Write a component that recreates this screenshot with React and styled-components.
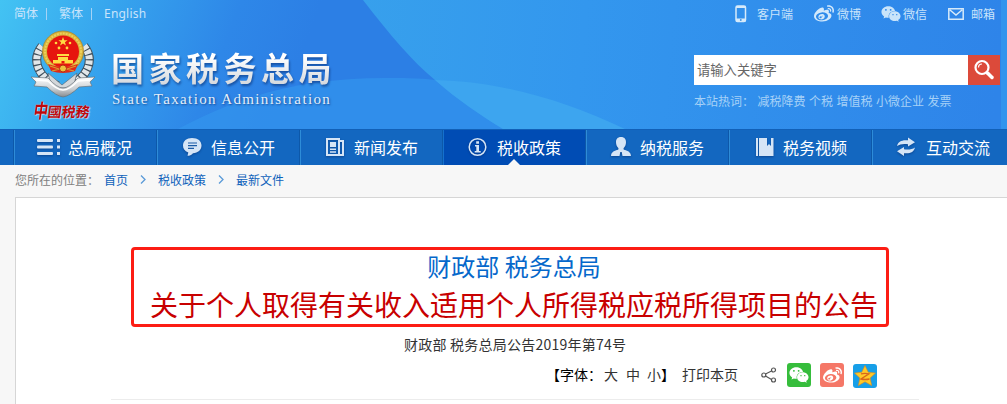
import React from 'react';
import styled, { createGlobalStyle, css } from 'styled-components';
import { FaWeibo, FaWeixin } from 'react-icons/fa';

const GlobalStyle = createGlobalStyle`
  * {
    box-sizing: border-box;
  }

  body {
    margin: 0;
    background: #f7f7f7;
    font-family: 'Noto Sans CJK SC', sans-serif;
    font-size: 12px;
    overflow: hidden;
  }
`;

const Page = styled.div`
  width: 1007px;
  height: 404px;
  overflow: hidden;
`;

const Header = styled.header`
  position: relative;
  z-index: 0;
  height: 130px;
  overflow: hidden;
  border-bottom: 1px solid #1160b8;
`;

const Backdrop = styled.svg`
  position: absolute;
  inset: 0;
  z-index: -1;
`;

const TopBar = styled.div`
  display: flex;
  justify-content: space-between;
  height: 27px;
  padding: 0 12px 0 14px;
  line-height: 27px;
  color: #c9e4fb;
`;

const Languages = styled.div`
  display: flex;
  white-space: pre;
`;

const Language = styled.span`
  font-family: 'Noto Sans', 'Noto Sans CJK SC', sans-serif;
  letter-spacing: ${props => props.$spacing || 0};
`;

const Divider = styled.span`
  width: 1px;
  height: 12px;
  margin: 8px ${props => props.$after} 0 8px;
  background: #a5d3f6;
`;

const Channels = styled.div`
  display: flex;
`;

const Channel = styled.span`
  display: flex;
  align-items: center;
  gap: ${props => props.$gap};
  margin-left: ${props => props.$before};
`;

const Banner = styled.div`
  display: flex;
  justify-content: space-between;
  padding: 0 7px 0 30px;
`;

const Brand = styled.div`
  display: flex;
`;

const EmblemBox = styled.div`
  width: 66px;
  padding-top: 3px;
`;

const Calligraphy = styled.div`
  margin: -4px 0 0 4px;
  height: 24px;
  line-height: 24px;
  font-size: 14px;
  font-weight: 700;
  white-space: nowrap;
  color: #bd080c;
  transform: skewX(-8deg);
  text-shadow: 0 0 1px rgba(255, 255, 255, 0.8), 1px 1px 1px rgba(232, 242, 251, 0.6);
`;

const LeadCharacter = styled.span`
  display: inline-block;
  width: 14px;
  font-size: 17px;
  transform: scale(0.85, 1.15);
  transform-origin: left center;
`;

const Names = styled.div`
  padding: 20px 0 0 15px;
`;

const ChineseName = styled.h1`
  margin: 0;
  height: 42px;
  line-height: 41px;
  font-size: 33px;
  font-weight: 700;
  letter-spacing: 4.5px;
  white-space: nowrap;
  color: transparent;
  background: linear-gradient(#fff 25%, #d4d8dd 90%);
  background-clip: text;
  filter: drop-shadow(1px 2px 1px rgba(10, 50, 120, 0.6));
`;

const EnglishName = styled.div`
  height: 20px;
  padding-left: 1px;
  line-height: 20px;
  font-family: 'Liberation Serif', serif;
  font-size: 15px;
  letter-spacing: 1.37px;
  white-space: nowrap;
  color: #e3eefa;
  text-shadow: 1px 1px 2px rgba(10, 50, 120, 0.7);
`;

const SearchArea = styled.div`
  width: 306px;
  padding-top: 28px;
`;

const SearchBox = styled.div`
  display: flex;
  height: 30px;
`;

const SearchField = styled.div`
  flex: 1;
  padding-left: 3px;
  line-height: 30px;
  font-size: 13.3px;
  color: #666;
  background: #fff;
`;

const SearchButton = styled.div`
  display: flex;
  align-items: center;
  justify-content: center;
  width: 32px;
  background: #dc4a3a;
`;

const HotWords = styled.div`
  display: flex;
  height: 32px;
  line-height: 32px;
  white-space: pre;
  color: #a6d1f7;
`;

const HotWord = styled.span`
  margin-right: 3.5px;
`;

const Nav = styled.nav`
  display: flex;
  height: 35px;
  padding-left: 14px;
  background: #1367c0;
`;

const NavItem = styled.div`
  position: relative;
  display: flex;
  flex: 0 0 143px;
  align-items: center;
  padding-left: 22px;
  border-left: 1px solid #2e8cd8;
  box-shadow: -1px 0 0 #0d58a9;
  font-size: 16px;
  color: #fff;

  ${props => props.$active && css`
    background: #004cb4;
    border-left-color: #1571cd;

    &::after {
      content: '';
      position: absolute;
      left: 64px;
      bottom: 0;
      border: 6px solid transparent;
      border-top: 0;
      border-bottom-color: #f7f7f7;
    }
  `}
`;

const NavIcon = styled.svg`
  flex: none;
  width: 24px;
  height: 24px;
  margin: 0 7px 2px 0;
  color: #d5e5f6;
  filter: drop-shadow(0 1px 1px rgba(0, 30, 90, 0.45));
`;

const NavLabel = styled.span`
  line-height: 35px;
  white-space: nowrap;
`;

const Breadcrumb = styled.div`
  display: flex;
  align-items: center;
  height: 32px;
  padding: 0 0 3px 15px;
  color: #808080;
`;

const Trail = styled.span`
  margin-right: 5px;
`;

const Crumb = styled.span`
  color: #0f62bb;
`;

const Chevron = styled.svg`
  margin: 0 12px;
`;

const Article = styled.main`
  height: 220px;
  margin-left: 15px;
  padding-top: 49px;
  background: #fff;
  border: 1px solid #d6d6d6;
  border-right: 0;
`;

const Highlight = styled.div`
  width: 758px;
  height: 80px;
  margin-left: 115px;
  border: 3px solid #fc1d14;
  border-radius: 4px;
  text-align: center;
  white-space: nowrap;
`;

const Issuer = styled.div`
  height: 34px;
  padding-left: 8px;
  line-height: 32px;
  font-size: 24px;
  color: #0568cb;
`;

const Title = styled.h2`
  height: 40px;
  margin: 0;
  padding-left: 8px;
  line-height: 41px;
  font-size: 28px;
  font-weight: 400;
  color: #c80000;
`;

const DocumentNumber = styled.div`
  height: 36px;
  padding-left: 388px;
  line-height: 35px;
  font-size: 14px;
  letter-spacing: 0.23px;
  color: #333;
`;

const Tools = styled.div`
  display: flex;
  align-items: center;
  width: 808px;
  height: 37px;
  margin-left: 95px;
  padding-left: 435px;
  border-bottom: 1px solid #ececec;
  white-space: nowrap;
  font-size: 14px;
  color: #000;
`;

const FontSizes = styled.span`
  display: flex;
  height: 46px;
  line-height: 33px;
`;

const SizeOption = styled.span`
  margin-left: ${props => props.$before};
  color: #333;
`;

const Print = styled.span`
  height: 46px;
  margin-left: 7px;
  line-height: 33px;
  color: #333;
`;

const ShareIcon = styled.svg`
  margin: -13px 10px 0 23px;
`;

const ShareButton = styled.span`
  display: flex;
  align-items: center;
  justify-content: center;
  width: 24px;
  height: 24px;
  margin: ${props => props.$top || '-12px'} 9px 0 0;
  border-radius: 3px;
  color: #fff;
  background: ${props => props.$color};
`;

const hotWords = ['减税降费', '个税', '增值税', '小微企业', '发票'];

const navItems = [
  {
    label: '总局概况',
    icon: (
      <g fill="currentColor">
        <rect x="0" y="4" width="16" height="3" rx="1" />
        <rect x="0" y="10.500" width="16" height="3" rx="1" />
        <rect x="0" y="17" width="16" height="3" rx="1" />
        <path d="M20 4h3v3h-3zM20 10.500h3v3h-3zM20 17h3v3h-3z" />
      </g>
    ),
  },
  {
    label: '信息公开',
    icon: (
      <>
        <path fill="currentColor" d="M12 3c6 0 9.500 3 9.500 7.500S18 18 13 18.200c-1.500 1.800-3.500 2.500-5.500 2.600l.8-3.400C4.500 16 3 13.500 3 10.500 3 6 6.500 3 12 3z" />
        <path stroke="#1c5ca6" strokeWidth="1.200" d="M8 8h9M8 10.700h9M8 13.400h6" />
      </>
    ),
  },
  {
    label: '新闻发布',
    icon: (
      <g fill="none" stroke="currentColor" strokeWidth="2">
        <path d="M4 4h12v16H4zM16 6h4v14h-4" />
        <path fill="currentColor" strokeWidth="0" d="M7 7h6v5H7zM7 13.500h6V15H7zM7 16.300h6v1.500H7z" />
      </g>
    ),
  },
  {
    label: '税收政策',
    active: true,
    icon: (
      <>
        <circle cx="11.500" cy="12" r="8.300" fill="none" stroke="currentColor" strokeWidth="1.500" />
        <path fill="currentColor" d="M10.200 6.200h2.800v2.600h-2.800zM9 10h4v6h1.700v1.500H8.700V16h1.600v-4.500H9z" />
      </>
    ),
  },
  {
    label: '纳税服务',
    icon: (
      <path fill="currentColor" d="M12 2c3.500 0 5 2.200 5 5.200 0 2.600-1 4.600-2.500 6l.3 1.500c3.500.8 7 2 7.200 6.300h-8.500l-.8-4h-1.400l-.8 4H2c.2-4.300 3.700-5.500 7.200-6.300l.3-1.500C8 11.800 7 9.800 7 7.200 7 4.200 8.500 2 12 2z" />
    ),
  },
  {
    label: '税务视频',
    icon: <path fill="currentColor" d="M4 3h2v18H4zM7 3h8v8l2-2 2 2V3h2.500v18H7z" />,
  },
  {
    label: '互动交流',
    icon: (
      <g fill="currentColor">
        <path d="M2 11C3 6.500 7 4.500 13 5.300V2.500L20 7.200l-7 4.300V9.300C9 8.500 5 9 2 11z" />
        <path d="M20 12.500c-1 4.500-5 6.500-11 5.700V21L2 16.300 9 12v2.200c4 .8 8 .3 11-1.700z" />
      </g>
    ),
  },
];

const HeaderBackdrop = () => (
  <Backdrop width="1007" height="129" viewBox="0 0 1007 129">
    <defs>
      <linearGradient id="left" gradientUnits="userSpaceOnUse" x1="0" y1="0" x2="280" y2="110">
        <stop offset="0" stopColor="#43c3f3" />
        <stop offset="0.4" stopColor="#35a1ed" />
        <stop offset="0.75" stopColor="#2e87e8" />
        <stop offset="1" stopColor="#2c7fe5" />
      </linearGradient>
      <linearGradient id="right" gradientUnits="userSpaceOnUse" x1="360" y1="0" x2="1000" y2="60">
        <stop offset="0" stopColor="#37a0ec" />
        <stop offset="0.35" stopColor="#3397ee" />
        <stop offset="1" stopColor="#2e84e9" />
      </linearGradient>
    </defs>
    <path fill="url(#left)" d="M0 0h520v129H0z" />
    <path fill="#3498ee" fillOpacity="0.6" d="M178 129C240 96 300 78 385 78C400 78 418 78 435 80L503 129z" />
    <path fill="url(#right)" d="M363 0C390 35 412 61 435 80C458 100 480 115 503 129H1007V0z" />
    <path fill="#3da5ef" d="M435 80C505 82 565 101 625 129H503C480 115 458 100 435 80z" />
    <path fill="#3194ee" d="M1001 0h6v129h-6z" />
  </Backdrop>
);

const Emblem = () => (
  <svg width="66" height="69" viewBox="0 0 66 69">
    <defs>
      <linearGradient id="silver" x1="0" y1="0" x2="0" y2="1">
        <stop offset="0" stopColor="#fff" />
        <stop offset="0.6" stopColor="#c9ced2" />
        <stop offset="1" stopColor="#858b90" />
      </linearGradient>
    </defs>
    <g fill="none" stroke="#40505c" strokeWidth="9">
      <path d="M12 16C0 31 10 49 28 56" />
      <path d="M54 16C66 31 56 49 38 56" />
    </g>
    <g fill="none" stroke="#e1e6e9" strokeWidth="7" strokeDasharray="4 1.200">
      <path d="M12 16C0 31 10 49 28 56" />
      <path d="M54 16C66 31 56 49 38 56" />
    </g>
    <path fill="#d3d7da" stroke="#59636b" strokeWidth="0.6" d="M18 43l14 12 15-12-4 15H22z" />
    <circle cx="33" cy="21.500" r="20.500" fill="#d9b43a" stroke="#a98124" strokeWidth="0.7" />
    <circle cx="33" cy="21.500" r="18" fill="none" stroke="#ecd05c" strokeWidth="2" strokeDasharray="2 1" />
    <circle cx="33" cy="21.500" r="16" fill="#e6150e" />
    <path fill="#e02a16" d="M18 34q15 6 30 0l-3 7q-12 4-24 0z" />
    <path fill="none" stroke="#d9a02f" strokeWidth="1.200" d="M20 36l9 3M46 36l-9 3M22 41l8-2M44 41l-8-2" />
    <path fill="#ffdc42" d="M33 7l1.200 3.200h3.400l-2.700 2 1 3.300-2.900-2-2.900 2 1-3.300-2.700-2h3.400z" />
    <g fill="#ffdc42">
      <circle cx="26" cy="13" r="1.300" />
      <circle cx="40" cy="13" r="1.300" />
      <circle cx="29" cy="18" r="1.400" />
      <circle cx="37" cy="18" r="1.400" />
      <path d="M27 24h12v2H27zM28 27h10v3H28zM23 30h20v3.500H23z" />
    </g>
    <path fill="#e6150e" d="M31.500 31h3v2.500h-3z" />
    <circle cx="33" cy="38.500" r="3.500" fill="#edc13e" stroke="#b72d14" />
    <path fill="url(#silver)" stroke="#68727a" strokeWidth="0.7" d="M1 47l17 1q9 10 15 10t15-10l17-1-5 5 2 4-13 1q-9 9-16 10-7-1-16-10L4 56l2-4z" />
    <path fill="none" stroke="#fff" strokeWidth="1.500" d="M6 50l12 1q9 9 15 9t15-9l12-1" />
  </svg>
);

const Separator = () => (
  <Chevron width="6" height="9" viewBox="0 0 6 9">
    <path fill="none" stroke="#5a9ad8" strokeWidth="1.300" d="M1 .5l4 4-4 4" />
  </Chevron>
);

const App = () => (
  <Page>
    <GlobalStyle />
    <Header>
      <HeaderBackdrop />
      <TopBar>
        <Languages>
          <Language>简体</Language>
          <Divider $after="12px" />
          <Language>繁体</Language>
          <Divider $after="12px" />
          <Language $spacing="0.2px">English</Language>
        </Languages>
        <Channels>
          <Channel $gap="10px">
            <svg width="12" height="18" viewBox="0 0 12 18">
              <rect x="1" y="1" width="9.500" height="15.500" rx="1.500" fill="none" stroke="#d6eafa" strokeWidth="1.500" />
              <path fill="#d6eafa" d="M1 1h9.500v2H1zM1 13.500h9.500v3H1z" />
              <circle cx="5.800" cy="15" r="0.900" fill="#3d91e0" />
            </svg>
            客户端
          </Channel>
          <Channel $gap="3px" $before="21px">
            <FaWeibo size={20} color="#d3e9fb" />
            微博
          </Channel>
          <Channel $gap="2px" $before="20px">
            <FaWeixin size={20} color="#c9e4fa" />
            微信
          </Channel>
          <Channel $gap="7px" $before="21px">
            <svg width="16" height="12" viewBox="0 0 16 12">
              <path fill="none" stroke="#d6eafa" strokeWidth="1.500" d="M.8.800h14.400v10.400H.8zM2 2l6 5 6-5" />
            </svg>
            邮箱
          </Channel>
        </Channels>
      </TopBar>
      <Banner>
        <Brand>
          <EmblemBox>
            <Emblem />
            <Calligraphy>
              <LeadCharacter>中</LeadCharacter>
              國税務
            </Calligraphy>
          </EmblemBox>
          <Names>
            <ChineseName>国家税务总局</ChineseName>
            <EnglishName>State Taxation Administration</EnglishName>
          </Names>
        </Brand>
        <SearchArea>
          <SearchBox>
            <SearchField>请输入关键字</SearchField>
            <SearchButton>
              <svg width="22" height="22" viewBox="0 0 22 22" fill="none" stroke="#fff">
                <circle cx="9" cy="8.500" r="6.500" strokeWidth="2.200" />
                <path strokeWidth="3.500" strokeLinecap="round" d="M14.500 14l4.500 4.500" />
                <path strokeWidth="1.200" d="M5.500 8.500a3.500 3.500 0 0 1 3.500-3.500" />
              </svg>
            </SearchButton>
          </SearchBox>
          <HotWords>
            <HotWord>本站热词：</HotWord>
            {hotWords.map(word => (
              <HotWord key={word}>{word}</HotWord>
            ))}
          </HotWords>
        </SearchArea>
      </Banner>
    </Header>
    <Nav>
      {navItems.map(item => (
        <NavItem key={item.label} $active={item.active}>
          <NavIcon viewBox="0 0 24 24">{item.icon}</NavIcon>
          <NavLabel>{item.label}</NavLabel>
        </NavItem>
      ))}
    </Nav>
    <Breadcrumb>
      <Trail>您所在的位置：</Trail>
      <Crumb>首页</Crumb>
      <Separator />
      <Crumb>税收政策</Crumb>
      <Separator />
      <Crumb>最新文件</Crumb>
    </Breadcrumb>
    <Article>
      <Highlight>
        <Issuer>财政部 税务总局</Issuer>
        <Title>关于个人取得有关收入适用个人所得税应税所得项目的公告</Title>
      </Highlight>
      <DocumentNumber>财政部 税务总局公告2019年第74号</DocumentNumber>
      <Tools>
        <FontSizes>
          【字体：
          <SizeOption $before="2px">大</SizeOption>
          <SizeOption $before="8px">中</SizeOption>
          <SizeOption $before="7px">小</SizeOption>
          】
        </FontSizes>
        <Print>打印本页</Print>
        <ShareIcon width="16" height="16" viewBox="0 0 16 16" fill="none" stroke="#555" strokeWidth="1.200">
          <path d="M4.500 7l6-3M4.500 9l6 3.500" />
          <circle cx="2.800" cy="8" r="2" />
          <circle cx="12.500" cy="3" r="2" />
          <circle cx="12.500" cy="13" r="2" />
        </ShareIcon>
        <ShareButton $color="#36bd3c">
          <FaWeixin size={20} />
        </ShareButton>
        <ShareButton $color="#f57767">
          <FaWeibo size={19} />
        </ShareButton>
        <ShareButton $color="#179fe8" $top="-10px">
          <svg width="24" height="24" viewBox="0 0 24 24">
            <path fill="#ffc928" stroke="#e68a10" strokeWidth="0.6" d="M12 1.500l3.200 6.700 7.300.9-5.400 5 1.500 7.400-6.600-3.700-6.600 3.700 1.500-7.400-5.400-5 7.300-.9z" />
            <path fill="none" stroke="#d9661a" strokeWidth="1.300" d="M8 9.800q4-.8 8 0l-8 5.200q4 1 8.500 0" />
          </svg>
        </ShareButton>
      </Tools>
    </Article>
  </Page>
);

export default App;
